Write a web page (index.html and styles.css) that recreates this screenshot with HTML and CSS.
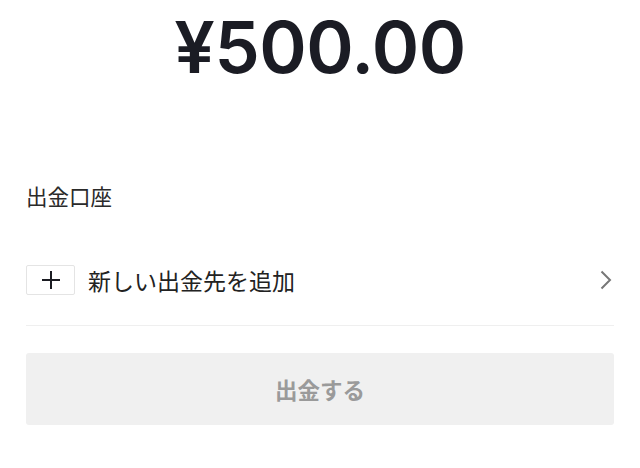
FILE: index.html
```html
<!DOCTYPE html>
<html lang="ja">
<head>
<meta charset="utf-8">
<link rel="stylesheet" href="styles.css">
</head>
<body>
<main class="page">
  <div class="amount">¥500.00</div>
  <div class="label">出金口座</div>
  <div class="row">
    <span class="plus-box">
      <svg width="18" height="18" viewBox="0 0 18 18"><path d="M9 0V18M0 9H18" stroke="#1b1c22" stroke-width="2" fill="none"/></svg>
    </span>
    <span class="row-text">新しい出金先を追加</span>
    <svg class="chevron" width="12" height="20" viewBox="0 0 12 20"><path d="M1.5 1.5L10 10L1.5 18.5" stroke="#777" stroke-width="2" fill="none"/></svg>
  </div>
  <button class="submit">出金する</button>
</main>
</body>
</html>
```
FILE: styles.css
```css
html, body {
  margin: 0;
  padding: 0;
  background: #fff;
}
.page {
  padding: 8px 26px 0 26px;
  font-family: "Noto Sans CJK JP", "Noto Sans", sans-serif;
}
.amount {
  font-family: Inter, "Liberation Sans", Arial, sans-serif;
  font-weight: 600;
  font-size: 72px;
  line-height: 78px;
  height: 78px;
  text-align: center;
  color: #1b1c24;
  letter-spacing: -0.5px;
}
.label {
  margin-top: 95px;
  font-size: 21.5px;
  line-height: 30px;
  color: #2a2a2a;
}
.row {
  display: flex;
  align-items: center;
  padding: 54px 0 30px 0;
  border-bottom: 1px solid #efefef;
}
.plus-box {
  display: flex;
  align-items: center;
  justify-content: center;
  box-sizing: border-box;
  width: 49px;
  height: 30px;
  border: 1px solid #e4e4e4;
  border-radius: 2px;
}
.row-text {
  flex: 1;
  margin-left: 13px;
  font-size: 23px;
  line-height: 30px;
  color: #222;
}
.chevron {
  margin-right: 2px;
}
.submit {
  display: block;
  width: 100%;
  height: 72px;
  margin-top: 27px;
  border: none;
  border-radius: 3px;
  background: #f0f0f0;
  color: #9a9a9a;
  font-family: "Noto Sans CJK JP", "Noto Sans", sans-serif;
  font-weight: 700;
  font-size: 22.5px;
  padding: 0;
}
```
